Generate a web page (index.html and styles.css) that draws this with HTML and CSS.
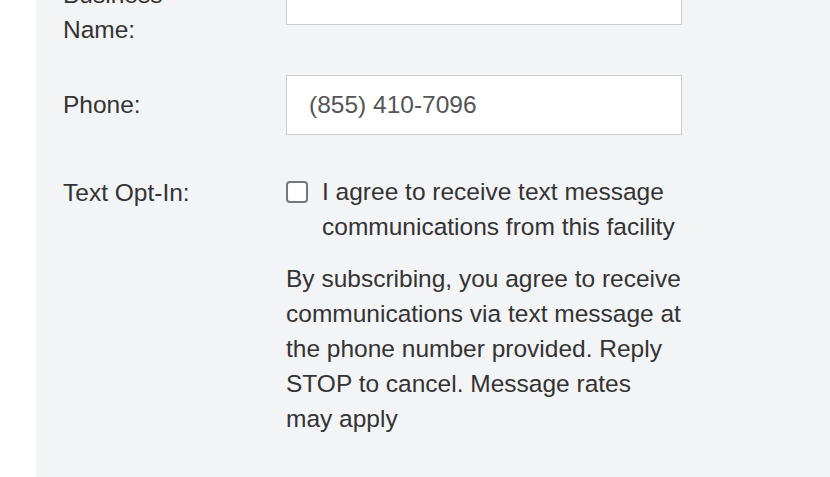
FILE: index.html
```html
<!DOCTYPE html>
<html lang="en">
<head>
    <meta charset="UTF-8">
    <meta name="viewport" content="width=device-width, initial-scale=1.0">
    <title>Contact Details</title>
    <link rel="stylesheet" href="styles.css">
</head>
<body>

    <form class="panel" autocomplete="off">
        <div class="row">
            <label class="label" for="business">Business Name:</label>
            <input type="text" id="business" name="business" class="field">
        </div>
        <div class="row">
            <label class="label" for="phone">Phone:</label>
            <input type="text" id="phone" name="phone" class="field" value="(855) 410-7096">
        </div>
        <div class="row">
            <span class="label">Text Opt-In:</span>
            <div class="optin">
                <label class="check">
                    <input type="checkbox" name="optin">
                    <span>I agree to receive text message communications from this facility</span>
                </label>
                <p class="note">By subscribing, you agree to receive communications via text message at the phone number provided. Reply STOP to cancel. Message rates may apply</p>
            </div>
        </div>
    </form>

</body>
</html>
```

FILE: styles.css
```css
* {
    margin: 0;
    padding: 0;
    box-sizing: border-box;
}
body {
    font-family: "Liberation Sans", Arial, sans-serif;
    font-size: 24.5px;
    line-height: 35px;
    color: #333;
    background: #fff;
    overflow: hidden;
}
.panel {
    margin: -35px 0 0 36px;
    padding: 0 27px;
    min-height: calc(100vh + 35px);
    background-color: #f3f4f6;
}
.row {
    display: grid;
    grid-template-columns: 223px 396px;
    align-items: start;
    margin-bottom: 28px;
}
.label {
    padding-top: 12px;
    padding-right: 80px;
}
.field {
    height: 60px;
    width: 396px;
    padding: 0 22px;
    border: 1px solid #ccc;
    border-radius: 0;
    background: #fff;
    outline: none;
    font: inherit;
    color: #555;
}
.optin {
    padding-top: 11px;
}
.check {
    display: flex;
    align-items: flex-start;
    gap: 14px;
}
.check input {
    appearance: none;
    -webkit-appearance: none;
    flex: none;
    width: 22px;
    height: 22px;
    margin-top: 7px;
    border: 2px solid #767676;
    border-radius: 4px;
    background: #fff;
}
.note {
    margin-top: 17px;
}
```
